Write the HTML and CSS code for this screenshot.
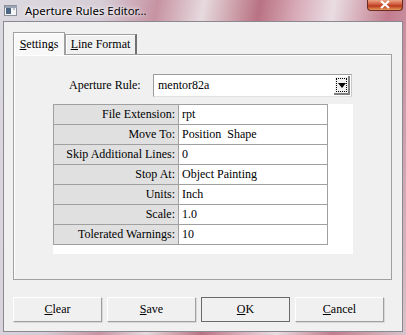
FILE: index.html
```html
<!DOCTYPE html>
<html>

<head>
  <title>Aperture Rules Editor...</title>
  <link rel="stylesheet" href="styles.css">
</head>

<body>
  <div class="window">
    <div class="titlebar">
      <svg class="app-icon" width="13" height="11" viewBox="0 0 13 11">
        <rect x="0.5" y="0.5" width="12" height="10" fill="#f4f4f4" stroke="#8a8f99" />
        <rect x="1" y="1" width="12" height="2" fill="#9aa6b8" />
        <rect x="2" y="3" width="5" height="6" fill="#4d6684" />
        <rect x="9" y="3" width="2" height="2" fill="#b8c2d0" />
      </svg>
      <span class="title">Aperture Rules Editor...</span>
      <div class="close-btn">
        <svg width="12" height="9" viewBox="0 0 12 9">
          <path d="M2 1 L10 8 M10 1 L2 8" stroke="#fff" stroke-width="2.2" />
        </svg>
      </div>
    </div>

    <div class="client">
      <div class="tabs">
        <div class="tab tab-active"><u>S</u>ettings</div>
        <div class="tab tab-line"><u>L</u>ine Format</div>
      </div>

      <div class="panel">
        <div class="rule-row">
          <span class="rule-label">Aperture Rule:</span>
          <div class="combo">
            <span class="combo-text">mentor82a</span>
            <div class="combo-drop">
              <div class="focus-rect">
                <svg width="8" height="6" viewBox="0 0 8 6">
                  <path d="M0 0 H8 L4 5 Z" fill="#000" />
                </svg>
              </div>
            </div>
          </div>
        </div>

        <div class="grid-box">
          <table class="props">
            <tr><td class="key">File Extension:</td><td class="val">rpt</td></tr>
            <tr><td class="key">Move To:</td><td class="val">Position&nbsp; Shape</td></tr>
            <tr><td class="key">Skip Additional Lines:</td><td class="val">0</td></tr>
            <tr><td class="key">Stop At:</td><td class="val">Object Painting</td></tr>
            <tr><td class="key">Units:</td><td class="val">Inch</td></tr>
            <tr><td class="key">Scale:</td><td class="val">1.0</td></tr>
            <tr><td class="key">Tolerated Warnings:</td><td class="val">10</td></tr>
          </table>
        </div>
      </div>

      <div class="buttons">
        <button class="btn"><u>C</u>lear</button>
        <button class="btn"><u>S</u>ave</button>
        <button class="btn btn-default"><u>O</u>K</button>
        <button class="btn"><u>C</u>ancel</button>
      </div>
    </div>
  </div>
</body>

</html>
```

FILE: styles.css
```css
html,
body {
  margin: 0;
  padding: 0;
}

body {
  width: 406px;
  height: 335px;
  overflow: hidden;
}

.window {
  width: 406px;
  height: 335px;
  box-sizing: border-box;
  padding: 0 3px 3px 3px;
  background: linear-gradient(100deg, #dcd9e0 0%, #d6cdd6 22%, #c793a3 34%, #e6dade 44%, #b97282 56%, #d8aab8 64%, #e9dde2 72%, #c27c8e 84%, #d9c3cb 100%);
}

.titlebar {
  height: 21px;
  display: flex;
  align-items: flex-start;
  position: relative;
}

.app-icon {
  margin: 5px 0 0 1px;
}

.title {
  margin: 3px 0 0 8px;
  font-family: "Noto Sans", sans-serif;
  font-size: 11.4px;
  color: #000;
  text-shadow: 0 0 6px #fff, 0 0 3px #fff;
}

.close-btn {
  position: absolute;
  right: 0;
  top: 0;
  width: 36px;
  height: 11px;
  box-sizing: border-box;
  border: 1px solid #6a2c22;
  border-top: none;
  border-radius: 0 0 4px 4px;
  background: linear-gradient(#e8a686 0%, #d0583a 45%, #b8381f 60%, #e69a56 100%);
  display: flex;
  justify-content: center;
  align-items: center;
}

.close-btn svg {
  margin-top: -2px;
}

.client {
  height: 311px;
  box-sizing: border-box;
  border: 1px solid #8a8890;
  background: #f0f0f0;
  font-family: "Liberation Serif", "Times New Roman", serif;
  font-size: 12px;
  color: #000;
}

.tabs {
  display: flex;
  align-items: flex-end;
  height: 22px;
  margin: 10px 0 0 9px;
}

.tab {
  box-sizing: border-box;
  height: 20px;
  line-height: 19px;
  padding: 0;
  text-align: center;
  white-space: nowrap;
  border: 1px solid #a0a0a0;
  border-bottom: none;
  border-right: 2px solid #707070;
  background: #f0f0f0;
  box-shadow: inset 1px 1px #fff;
}

.tab-active {
  width: 52px;
  height: 23px;
  line-height: 23px;
  margin-bottom: -1px;
  border-right: 1px solid #a0a0a0;
  background: #f8f8f8;
  position: relative;
  z-index: 1;
}

.tab-line {
  width: 72px;
}

.panel {
  height: 226px;
  box-sizing: border-box;
  margin: 0 10px 0 9px;
  border: 1px solid #a0a0a0;
  box-shadow: inset 1px 1px #fff;
  padding: 19px 0 0 39px;
}

.rule-row {
  display: flex;
  align-items: center;
  height: 23px;
}

.rule-label {
  width: 100px;
  padding-left: 16px;
  box-sizing: border-box;
}

.combo {
  width: 199px;
  height: 23px;
  box-sizing: border-box;
  border: 1px solid #9c9c9c;
  border-right-color: #c8c8c8;
  border-bottom-color: #e0e0e0;
  background: #fff;
  display: flex;
  align-items: center;
  justify-content: space-between;
}

.combo-text {
  padding-left: 4px;
}

.combo-drop {
  width: 16px;
  height: 19px;
  box-sizing: border-box;
  margin-right: 1px;
  background: #f0f0f0;
  border-right: 2px solid #808080;
  border-bottom: 2px solid #808080;
  box-shadow: inset 1px 1px #fff;
  padding: 2px 1px 1px 2px;
}

.focus-rect {
  height: 100%;
  box-sizing: border-box;
  border: 1px dotted #000;
  display: flex;
  justify-content: center;
  padding-top: 4px;
}

.grid-box {
  width: 300px;
  height: 150px;
  margin-top: 7px;
  background: #fff;
}

.props {
  border-collapse: collapse;
  width: 275px;
}

.props td {
  height: 19px;
  padding: 0 3px;
  border: 1px solid #a0a0a0;
  white-space: nowrap;
}

.props .key {
  width: 118px;
  text-align: right;
  background: #e0e0e0;
}

.props .val {
  text-align: left;
}

.buttons {
  display: flex;
  gap: 5px;
  margin: 17px 0 0 9px;
}

.btn {
  width: 89px;
  height: 25px;
  padding: 0;
  font-family: "Liberation Serif", "Times New Roman", serif;
  font-size: 12px;
  color: #000;
  background: #f0f0f0;
  border: 1px solid #a0a0a0;
  border-top-color: #fff;
  border-left-color: #fff;
  box-shadow: 1px 1px 0 #d8d8d8;
}

.btn-default {
  border: 1px solid #6a6a6a;
  box-shadow: none;
}
```
